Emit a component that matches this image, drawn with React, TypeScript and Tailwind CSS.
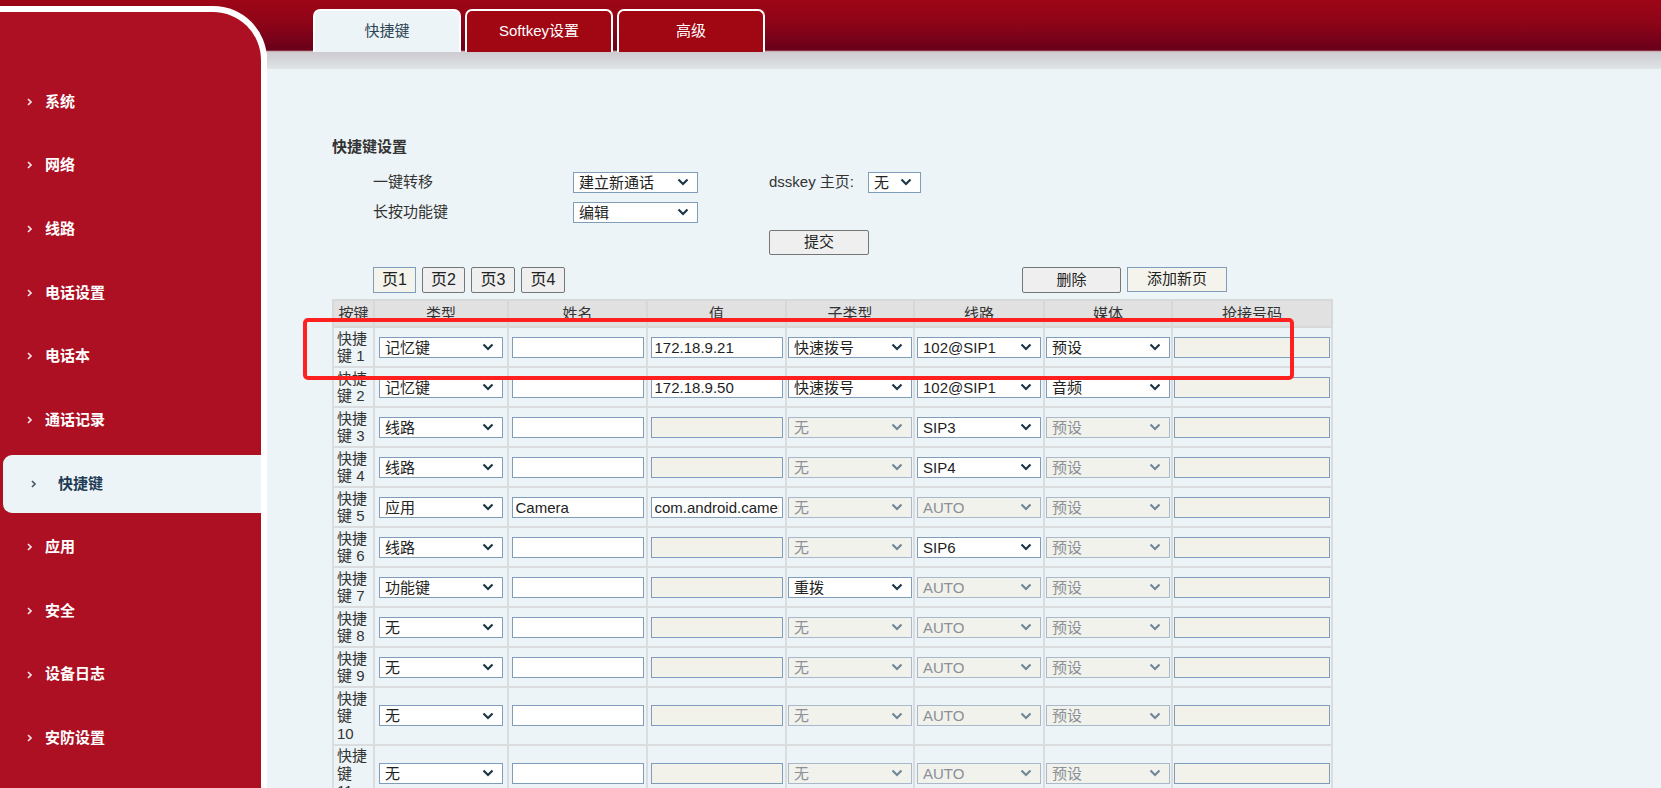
import React from 'react';

type Row = {
  type: string;
  name?: string;
  value?: string;
  sub: string;
  subOn?: boolean;
  line: string;
  lineOn?: boolean;
  media: string;
  mediaOn?: boolean;
};

const menu = ['系统', '网络', '线路', '电话设置', '电话本', '通话记录', '快捷键', '应用', '安全', '设备日志', '安防设置'];

const idle: Row = { type: '无', sub: '无', line: 'AUTO', media: '预设' };

const rows: Row[] = [
  { type: '记忆键', value: '172.18.9.21', sub: '快速拨号', subOn: true, line: '102@SIP1', lineOn: true, media: '预设', mediaOn: true },
  { type: '记忆键', value: '172.18.9.50', sub: '快速拨号', subOn: true, line: '102@SIP1', lineOn: true, media: '音频', mediaOn: true },
  { type: '线路', sub: '无', line: 'SIP3', lineOn: true, media: '预设' },
  { type: '线路', sub: '无', line: 'SIP4', lineOn: true, media: '预设' },
  { type: '应用', name: 'Camera', value: 'com.android.camera', sub: '无', line: 'AUTO', media: '预设' },
  { type: '线路', sub: '无', line: 'SIP6', lineOn: true, media: '预设' },
  { type: '功能键', sub: '重拨', subOn: true, line: 'AUTO', media: '预设' },
  idle,
  idle,
  idle,
  idle,
];

const heads = ['按键', '类型', '姓名', '值', '子类型', '线路', '媒体', '抢接号码'];

function Chevron({ color }: { color: string }) {
  return (
    <svg width="12" height="8" viewBox="0 0 12 8" className="shrink-0">
      <path d="M1.5 1.5 L6 6 L10.5 1.5" fill="none" stroke={color} strokeWidth="2.2" />
    </svg>
  );
}

function Arrow({ color }: { color: string }) {
  return (
    <svg width="5" height="8" viewBox="0 0 5 8" className="shrink-0">
      <path d="M1 1 L4 4 L1 7" fill="none" stroke={color} strokeWidth="1.7" />
    </svg>
  );
}

function Sel({ value, off, className }: { value: string; off?: boolean; className: string }) {
  return (
    <div
      className={`flex h-[21px] items-center justify-between border pl-[5px] pr-[8px] text-[15px] leading-[19px] ${
        off ? 'border-[#a9b9c9] bg-[#f2f2ed] text-[#8a9096]' : 'border-[#7f9db9] bg-white text-[#222]'
      } ${className}`}
    >
      <span className="truncate">{value}</span>
      <Chevron color={off ? '#6f8898' : '#1e3646'} />
    </div>
  );
}

function Field({ value = '', off, className }: { value?: string; off?: boolean; className: string }) {
  return (
    <input
      readOnly
      value={value}
      className={`block h-[21px] border border-[#7f9db9] px-[3px] text-[15px] text-[#222] outline-none ${
        off ? 'bg-[#f2f1ea]' : 'bg-white'
      } ${className}`}
    />
  );
}

export default function App() {
  return (
    <div className="relative flex min-h-screen bg-[linear-gradient(180deg,#9d0616_0px,#8d0418_24px,#69001a_50px,#a4646d_51px,#edf4f7_52px)] text-[#333] [font-family:'Liberation_Sans','Noto_Sans_CJK_SC',sans-serif]">
      {/* sidebar */}
      <aside className="mt-[6px] w-[267px] shrink-0 rounded-tr-[54px] border-t-[6px] border-r-[6px] border-white bg-[#ac1022] pt-[58px]">
        {menu.map((m) =>
          m === '快捷键' ? (
            <div key={m} className="flex h-[63.66px] items-center">
              <div className="ml-[3px] flex h-[58px] flex-1 items-center rounded-l-[9px] bg-[#edf4f7] pl-[28px] text-[15px] font-bold text-[#1f3b55]">
                <Arrow color="#4a5a66" />
                <span className="ml-[22px]">{m}</span>
              </div>
            </div>
          ) : (
            <div key={m} className="flex h-[63.66px] items-center pl-[27px] text-[15px] font-bold text-white">
              <Arrow color="#f3dfe2" />
              <span className="ml-[13px]">{m}</span>
            </div>
          )
        )}
      </aside>

      <main className="flex-1">
        {/* tabs */}
        <div className="flex h-[52px] items-end gap-[4px] pl-[46px]">
          <div className="flex h-[43px] w-[148px] items-center justify-center rounded-t-[7px] border-2 border-b-0 border-white bg-[#edf4f7] text-[15px] text-[#2d4656]">
            快捷键
          </div>
          <div className="flex h-[43px] w-[148px] items-center justify-center rounded-t-[7px] border-2 border-b-0 border-white bg-[#a10613] text-[15px] text-white">
            Softkey设置
          </div>
          <div className="flex h-[43px] w-[148px] items-center justify-center rounded-t-[7px] border-2 border-b-0 border-white bg-[#a10613] text-[15px] text-white">
            高级
          </div>
        </div>
        <div className="h-[17px] bg-[linear-gradient(180deg,#cdcbd0,#dfe4e7)]" />

        <div className="pl-[65px] pt-[69px] pb-[40px]">
          <h2 className="text-[15px] font-bold leading-[18px] text-[#333]">快捷键设置</h2>

          <div className="mt-[11px] text-[15px]">
            <div className="flex h-[30px] items-center pl-[41px]">
              <span className="w-[200px]">一键转移</span>
              <Sel value="建立新通话" className="w-[125px]" />
              <span className="ml-[71px] w-[96px]">dsskey 主页:</span>
              <Sel value="无" className="ml-[3px] w-[53px]" />
            </div>
            <div className="flex h-[30px] items-center pl-[41px]">
              <span className="w-[200px]">长按功能键</span>
              <Sel value="编辑" className="w-[125px]" />
            </div>
            <button className="mt-[3px] ml-[437px] h-[25px] w-[100px] rounded-[2px] border border-[#767676] bg-[#efefef] text-[15px] text-[#222]">
              提交
            </button>
          </div>

          <div className="mt-[12px] flex w-[895px] justify-between pl-[41px] text-[16px] text-[#222]">
            <div className="flex gap-[6px]">
              <button className="h-[26px] w-[43px] border border-[#7f9db9] bg-[#f4f4ec]">页1</button>
              <button className="h-[26px] w-[43px] rounded-[2px] border border-[#767676] bg-[#efefef]">页2</button>
              <button className="h-[26px] w-[44px] rounded-[2px] border border-[#767676] bg-[#efefef]">页3</button>
              <button className="h-[26px] w-[44px] rounded-[2px] border border-[#767676] bg-[#efefef]">页4</button>
            </div>
            <div className="flex gap-[6px] text-[15px]">
              <button className="h-[26px] w-[99px] rounded-[2px] border border-[#767676] bg-[#efefef]">删除</button>
              <button className="h-[25px] w-[100px] border border-[#7f9db9] bg-[#f4f4ec]">添加新页</button>
            </div>
          </div>

          <table className="mt-[6px] w-[999px] table-fixed border-collapse text-[15px] leading-[17.5px] text-[#333]">
            <colgroup>
              <col className="w-[41px]" />
              <col className="w-[134px]" />
              <col className="w-[139px]" />
              <col className="w-[139px]" />
              <col className="w-[128px]" />
              <col className="w-[130px]" />
              <col className="w-[128px]" />
              <col className="w-[160px]" />
            </colgroup>
            <thead>
              <tr className="h-[27px] bg-[#e1e1e1]">
                {heads.map((h) => (
                  <th key={h} className="border-2 border-[#d8d8d8] px-0 text-center font-normal">
                    {h}
                  </th>
                ))}
              </tr>
            </thead>
            <tbody>
              {rows.map((r, i) => (
                <tr key={i}>
                  <td className="border-2 border-[#dadcdd] px-[3px] py-[1.5px] text-left align-middle">快捷键 {i + 1}</td>
                  <td className="border-2 border-[#dadcdd] align-middle">
                    <Sel value={r.type} className="mx-auto w-[124px]" />
                  </td>
                  <td className="border-2 border-[#dadcdd] align-middle">
                    <Field value={r.name} className="mx-auto w-[132px]" />
                  </td>
                  <td className="border-2 border-[#dadcdd] align-middle">
                    <Field value={r.value} off={!r.value} className="mx-auto w-[132px]" />
                  </td>
                  <td className="border-2 border-[#dadcdd] align-middle">
                    <Sel value={r.sub} off={!r.subOn} className="mx-auto w-[124px]" />
                  </td>
                  <td className="border-2 border-[#dadcdd] align-middle">
                    <Sel value={r.line} off={!r.lineOn} className="mx-auto w-[124px]" />
                  </td>
                  <td className="border-2 border-[#dadcdd] align-middle">
                    <Sel value={r.media} off={!r.mediaOn} className="mx-auto w-[124px]" />
                  </td>
                  <td className="border-2 border-[#dadcdd] align-middle">
                    <Field off className="mx-auto w-[156px]" />
                  </td>
                </tr>
              ))}
            </tbody>
          </table>
        </div>
      </main>

      {/* annotation box */}
      <div className="pointer-events-none absolute left-[303px] top-[318px] h-[62px] w-[991px] rounded-[5px] border-4 border-[#ff2020]" />
    </div>
  );
}
